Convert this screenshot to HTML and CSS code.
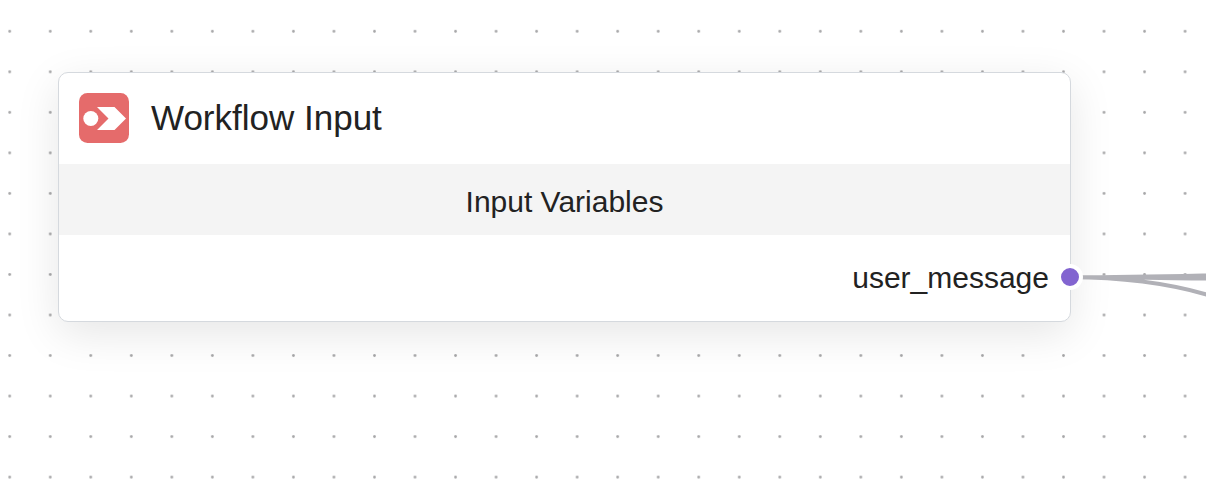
FILE: index.html
```html
<!DOCTYPE html>
<html lang="en">
<head>
<meta charset="utf-8">
<meta name="viewport" content="width=device-width, initial-scale=1">
<title>Workflow Input</title>
<link rel="stylesheet" href="styles.css">
</head>
<body>
<main class="canvas">
  <svg class="grid" aria-hidden="true">
    <defs>
      <pattern id="dots" x="-10.55" y="11.05" width="40.53" height="40.53" patternUnits="userSpaceOnUse">
        <circle cx="20.27" cy="20.27" r="1.4" fill="#a6a6a8"/>
      </pattern>
    </defs>
    <rect width="100%" height="100%" fill="url(#dots)"/>
  </svg>
  <article class="node">
    <header class="node-header">
      <svg class="node-icon" viewBox="0 0 50 50" aria-hidden="true">
        <rect width="50" height="50" rx="8.5" fill="#e56b6b"/>
        <circle cx="11.8" cy="25.5" r="7.5" fill="#fff"/>
        <path d="M18 14H35.5L47 25.5L35.5 37H18L29.5 25.5Z" fill="#fff"/>
      </svg>
      <h1 class="node-title">Workflow Input</h1>
    </header>
    <h2 class="section-title">Input Variables</h2>
    <div class="port-row">
      <span class="port-label">user_message</span>
      <svg class="edges" viewBox="0 0 136 40" aria-hidden="true">
        <path d="M0 20.3C60 20.3 90 19.5 140 18.3M0 20.3C60 20.3 90 21 140 21.6M0 20.3C56 20.3 98 26 140 38.5" fill="none" stroke="#b1b1b7" stroke-width="4"/>
      </svg>
      <span class="port-handle"></span>
    </div>
  </article>
</main>
</body>
</html>
```
FILE: styles.css
```css
* {
  box-sizing: border-box;
}

body {
  margin: 0;
  background: #fff;
  color: #222;
  font-family: "Liberation Sans", Arial, Helvetica, sans-serif;
}

.canvas {
  position: relative;
  min-height: 100vh;
  padding: 72px 135px 72px 58px;
  overflow: hidden;
}

.grid {
  position: absolute;
  inset: 0;
  width: 100%;
  height: 100%;
}

.node {
  position: relative;
  border: 1px solid #d5d9de;
  border-radius: 10px;
  background: #fff;
  box-shadow: 0 12px 44px rgba(0, 0, 0, 0.1);
}

.node-header {
  display: flex;
  align-items: center;
  gap: 22px;
  padding: 20px 20px 21px;
}

.node-icon {
  flex: none;
  width: 50px;
  height: 50px;
}

.node-title {
  margin: 0;
  font-size: 35px;
  font-weight: 400;
  line-height: 50px;
}

.section-title {
  margin: 0;
  padding: 20px 0 15px;
  background: #f4f4f4;
  font-size: 30px;
  font-weight: 400;
  line-height: 36px;
  text-align: center;
}

.port-row {
  position: relative;
  display: flex;
  justify-content: flex-end;
  padding: 25px 21px 25px;
}

.port-label {
  font-size: 30px;
  line-height: 36px;
}

.port-handle {
  position: absolute;
  top: 42px;
  right: 0;
  width: 26px;
  height: 26px;
  border: 4px solid #fff;
  border-radius: 50%;
  background: #8264d0;
  transform: translate(50%, -50%);
}

.edges {
  position: absolute;
  top: 22px;
  left: 100%;
  width: 136px;
  height: 40px;
}
```
